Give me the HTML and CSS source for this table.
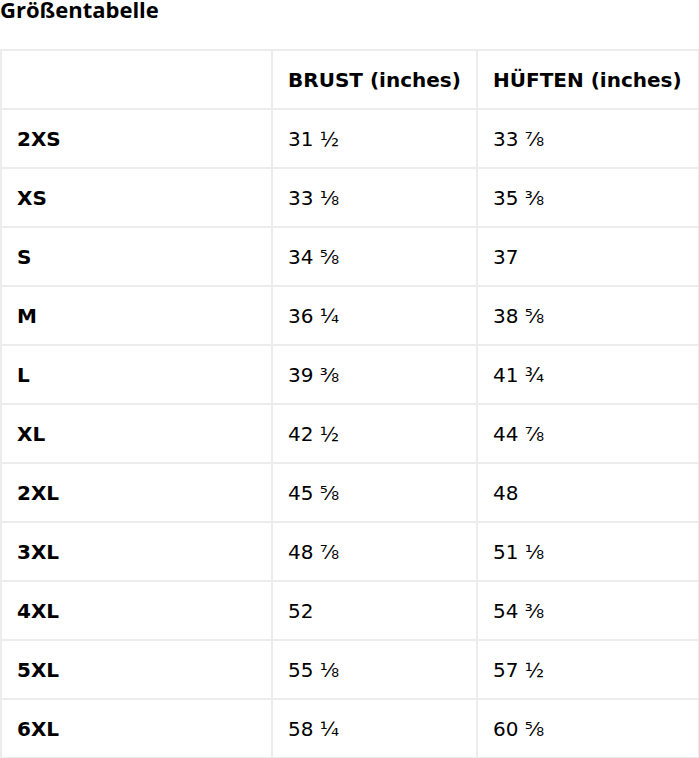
FILE: index.html
```html
<!DOCTYPE html>
<html lang="de">
<head>
<meta charset="utf-8">
<title>Größentabelle</title>
<link rel="stylesheet" href="styles.css">
</head>
<body>
<h2 class="title">Größentabelle</h2>
<table class="size-table">
<colgroup><col class="c1"><col class="c2"><col class="c3"></colgroup>
<thead>
<tr><th></th><th>BRUST (inches)</th><th>HÜFTEN (inches)</th></tr>
</thead>
<tbody>
<tr><th>2XS</th><td>31 ½</td><td>33 ⅞</td></tr>
<tr><th>XS</th><td>33 ⅛</td><td>35 ⅜</td></tr>
<tr><th>S</th><td>34 ⅝</td><td>37</td></tr>
<tr><th>M</th><td>36 ¼</td><td>38 ⅝</td></tr>
<tr><th>L</th><td>39 ⅜</td><td>41 ¾</td></tr>
<tr><th>XL</th><td>42 ½</td><td>44 ⅞</td></tr>
<tr><th>2XL</th><td>45 ⅝</td><td>48</td></tr>
<tr><th>3XL</th><td>48 ⅞</td><td>51 ⅛</td></tr>
<tr><th>4XL</th><td>52</td><td>54 ⅜</td></tr>
<tr><th>5XL</th><td>55 ⅛</td><td>57 ½</td></tr>
<tr><th>6XL</th><td>58 ¼</td><td>60 ⅝</td></tr>
</tbody>
</table>
</body>
</html>
```
FILE: styles.css
```css
html, body {
  margin: 0;
  padding: 0;
  background: #fff;
  color: #000;
}
body {
  font-family: "DejaVu Sans", sans-serif;
}
.title {
  font-family: "Open Sans", "Noto Sans", sans-serif;
  font-weight: 700;
  font-size: 22px;
  line-height: 18px;
  margin: 0 0 31px 0;
  padding: 0;
}
.size-table {
  border-collapse: collapse;
  width: 698px;
  table-layout: fixed;
}
.c1 { width: 271px; }
.c2 { width: 205px; }
.c3 { width: 222px; }
.size-table th,
.size-table td {
  border: 2px solid #ececec;
  height: 59px;
  padding: 0 15px;
  text-align: left;
  vertical-align: middle;
  font-size: 20px;
  box-sizing: border-box;
}
.size-table th {
  font-weight: 700;
}
.size-table td {
  font-weight: 400;
}
```
